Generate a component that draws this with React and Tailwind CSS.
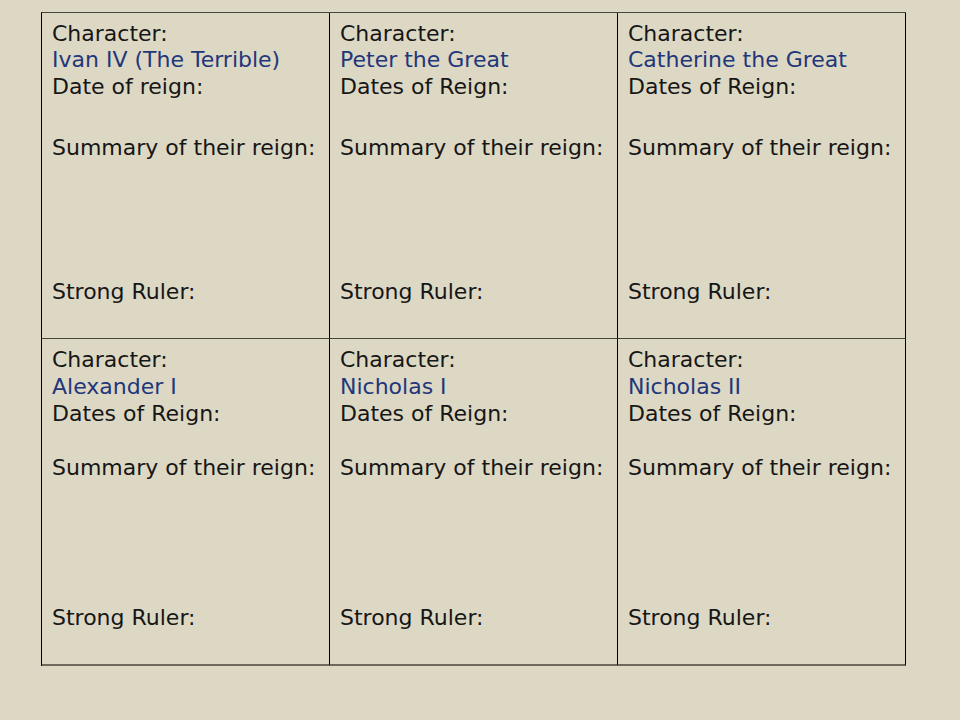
const rulers = [
  { name: 'Ivan IV (The Terrible)', dates: 'Date of reign:' },
  { name: 'Peter the Great', dates: 'Dates of Reign:' },
  { name: 'Catherine the Great', dates: 'Dates of Reign:' },
  { name: 'Alexander I', dates: 'Dates of Reign:' },
  { name: 'Nicholas I', dates: 'Dates of Reign:' },
  { name: 'Nicholas II', dates: 'Dates of Reign:' },
];

function Cell({ ruler, bottom }) {
  return (
    <div
      className={
        bottom
          ? 'h-[327px] border-r border-r-black border-b-2 border-b-[#6e695c] pl-[10px] pt-[8px] flex flex-col leading-[26px]'
          : 'h-[326px] border-r border-r-black border-b border-b-[#48443a] pl-[10px] pt-[8px] flex flex-col leading-[26px]'
      }
    >
      <p className="text-[#161616]">Character:</p>
      <p className={bottom ? 'mt-px text-[#22367a]' : 'text-[#22367a]'}>{ruler.name}</p>
      <p className="mt-px text-[#161616]">{ruler.dates}</p>
      <p className={bottom ? 'mt-[28px] text-[#161616]' : 'mt-[35px] text-[#161616]'}>
        Summary of their reign:
      </p>
      <p className={bottom ? 'mt-[124px] text-[#161616]' : 'mt-[118px] text-[#161616]'}>
        Strong Ruler:
      </p>
    </div>
  );
}

export default function App() {
  return (
    <div className="w-[960px] h-[720px] bg-[#ddd8c4] pt-[12px] pl-[41px] font-['DejaVu_Sans',sans-serif] text-[22px]">
      <div className="w-[865px] grid grid-cols-[288px_288px_288px] border-l border-l-black border-t border-t-[#48443a]">
        {rulers.map((ruler, i) => (
          <Cell key={ruler.name} ruler={ruler} bottom={i > 2} />
        ))}
      </div>
    </div>
  );
}
